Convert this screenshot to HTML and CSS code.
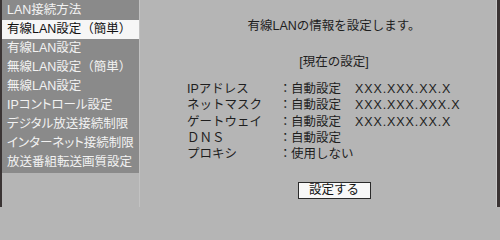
FILE: index.html
```html
<!DOCTYPE html>
<html lang="ja">
<head>
<meta charset="utf-8">
<link rel="stylesheet" href="styles.css">
</head>
<body>
<div class="screen">
  <div class="side">
    <ul class="menu">
      <li>LAN接続方法</li>
      <li class="sel">有線LAN設定（簡単）</li>
      <li>有線LAN設定</li>
      <li>無線LAN設定（簡単）</li>
      <li>無線LAN設定</li>
      <li class="kana">IPコントロール設定</li>
      <li class="kana">デジタル放送接続制限</li>
      <li class="kana">インターネット接続制限</li>
      <li>放送番組転送画質設定</li>
    </ul>
  </div>
  <div class="main">
    <div class="content">
      <p class="title">有線LANの情報を設定します。</p>
      <p class="sub">[現在の設定]</p>
      <div class="table">
        <div class="row"><span class="lbl">IPアドレス</span><span class="colon">：</span><span class="val">自動設定</span><span class="addr">XXX.XXX.XX.X</span></div>
        <div class="row"><span class="lbl">ネットマスク</span><span class="colon">：</span><span class="val">自動設定</span><span class="addr">XXX.XXX.XXX.X</span></div>
        <div class="row"><span class="lbl">ゲートウェイ</span><span class="colon">：</span><span class="val">自動設定</span><span class="addr">XXX.XXX.XX.X</span></div>
        <div class="row"><span class="lbl">ＤＮＳ</span><span class="colon">：</span><span class="val">自動設定</span></div>
        <div class="row"><span class="lbl">プロキシ</span><span class="colon">：</span><span class="val">使用しない</span></div>
      </div>
      <div class="btnwrap"><span class="btn">設定する</span></div>
    </div>
  </div>
</div>
</body>
</html>
```

FILE: styles.css
```css
html, body {
  margin: 0;
  padding: 0;
  background: #b5b5b5;
}
body {
  font-family: "Liberation Sans", "Noto Sans CJK JP", sans-serif;
  font-size: 12.5px;
  color: #1e1e1e;
}
.screen {
  width: 500px;
  height: 207px;
  display: flex;
  box-sizing: border-box;
  border-left: 2px solid #3a3434;
  border-right: 3px solid #3a3434;
  background: #b5b5b5;
}
.side {
  width: 137px;
  flex: none;
}
.menu {
  list-style: none;
  margin: 0;
  padding: 1px 0 1px;
  background: #8a8a8a;
}
.menu li {
  height: 19px;
  line-height: 19px;
  padding-left: 5px;
  color: #f2f2f2;
  white-space: nowrap;
}
.menu li.kana {
  font-feature-settings: "palt";
}
.menu li.sel {
  background: #f6f6f6;
  color: #111;
}
.main {
  flex: 1;
  border-left: 1px solid #c2c2c2;
  border-right: 1px solid #c8c8c8;
  padding-left: 32px;
}
.content {
  display: flex;
  flex-direction: column;
}
.title {
  margin: 18px 0 0;
  line-height: 16px;
  text-align: center;
}
.sub {
  margin: 20px 0 0;
  line-height: 16px;
  text-align: center;
}
.table {
  margin: 11px 0 0 15px;
}
.row {
  display: flex;
  height: 16.3px;
  line-height: 16.3px;
  white-space: nowrap;
}
.lbl {
  width: 92px;
  flex: none;
}
.colon {
  width: 12px;
  flex: none;
}
.val {
  width: 64px;
  flex: none;
}
.addr {
  font-family: "Liberation Sans", sans-serif;
  letter-spacing: 0.9px;
}
.btnwrap {
  margin-top: 20px;
  display: flex;
  justify-content: center;
}
.btn {
  width: 71px;
  height: 15px;
  line-height: 15px;
  border: 1px solid #2a2a2a;
  background: #f8f8f8;
  text-align: center;
  color: #111;
}
```
